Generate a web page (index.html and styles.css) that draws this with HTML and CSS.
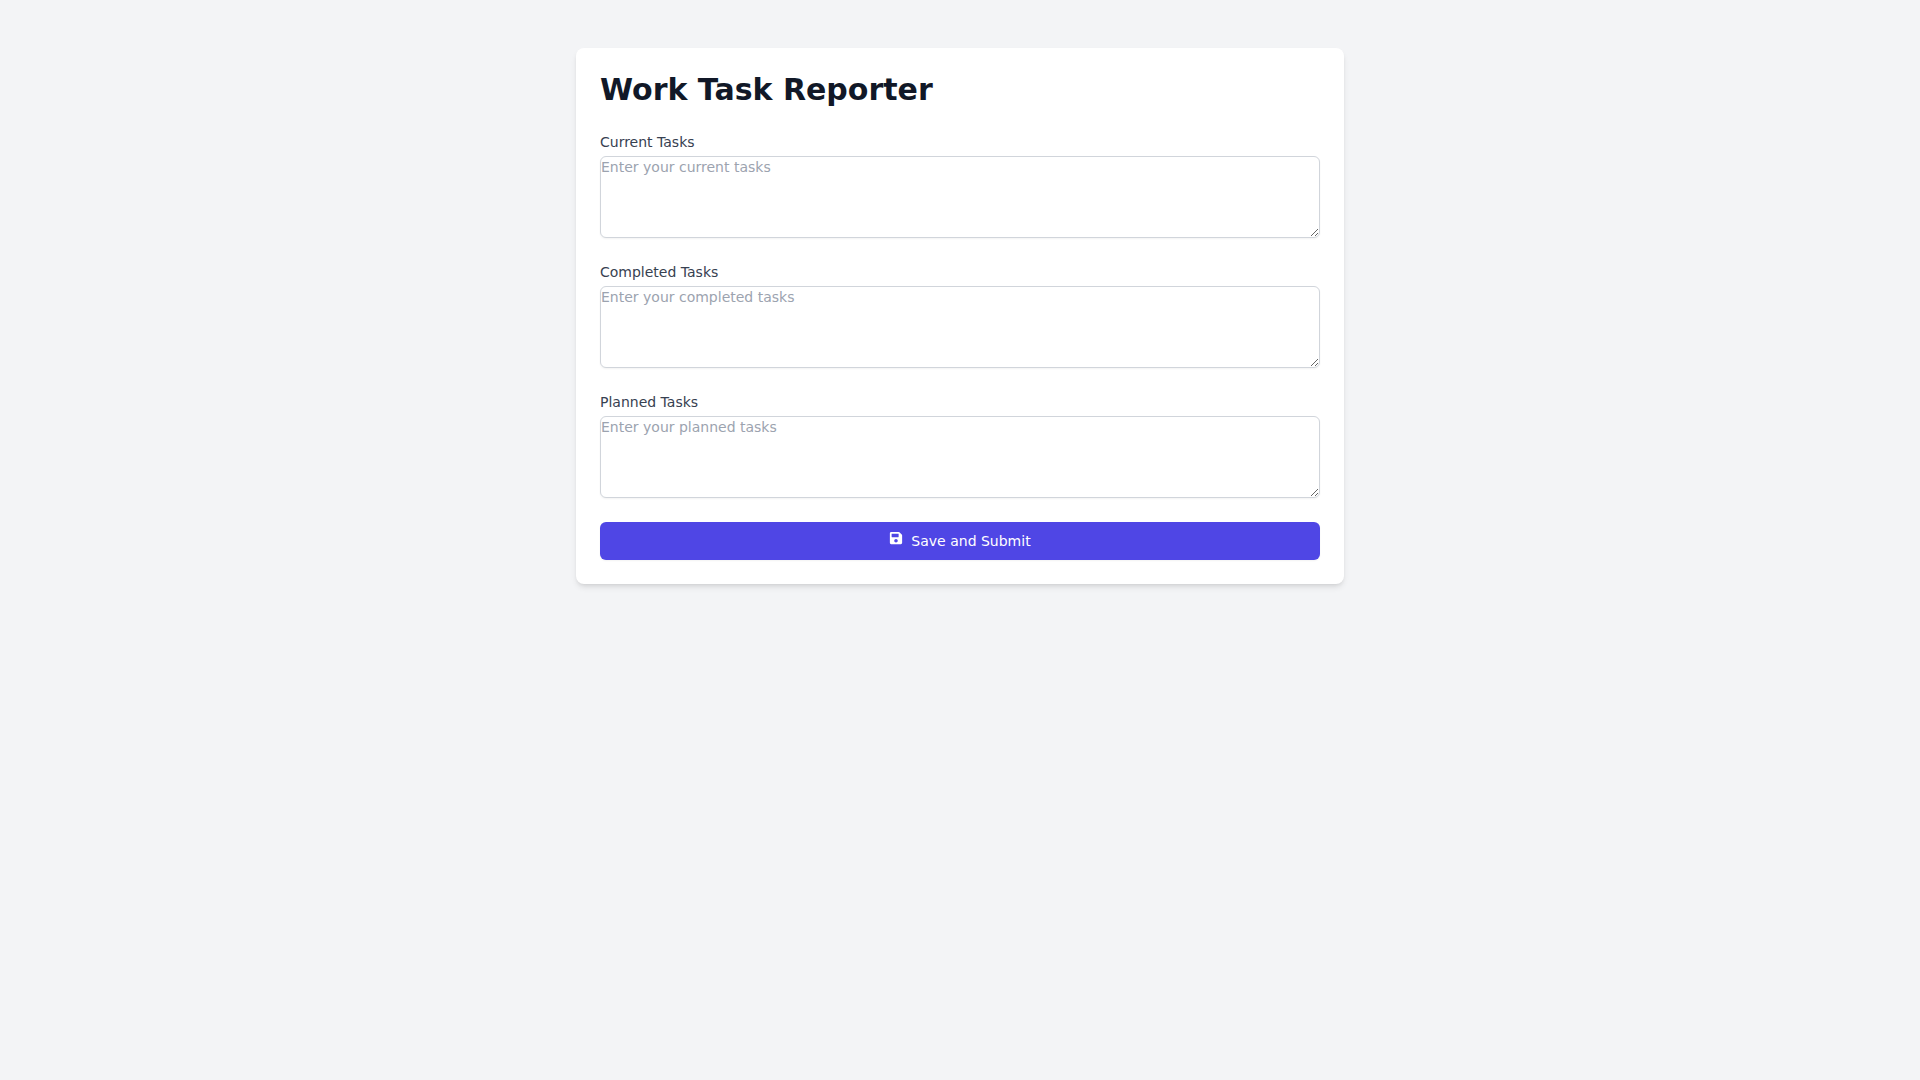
FILE: index.html
```html
<!DOCTYPE html>
<html lang="en">
<head>
    <meta charset="UTF-8">
    <meta name="viewport" content="width=device-width, initial-scale=1.0">
    <title>Work Task Reporter</title>
    <link rel="stylesheet" href="styles.css">
</head>
<body>
    <div class="container">
        <h1>Work Task Reporter</h1>
        <form class="task-form">
            <div class="field">
                <label for="currentTasks">Current Tasks</label>
                <textarea id="currentTasks" name="currentTasks" rows="4" placeholder="Enter your current tasks"></textarea>
            </div>
            <div class="field">
                <label for="completedTasks">Completed Tasks</label>
                <textarea id="completedTasks" name="completedTasks" rows="4" placeholder="Enter your completed tasks"></textarea>
            </div>
            <div class="field">
                <label for="plannedTasks">Planned Tasks</label>
                <textarea id="plannedTasks" name="plannedTasks" rows="4" placeholder="Enter your planned tasks"></textarea>
            </div>
            <button type="submit">
                <svg class="icon" viewBox="0 0 448 512" aria-hidden="true">
                    <path fill="currentColor" d="M433.941 129.941l-83.882-83.882A48 48 0 0 0 316.118 32H48C21.490 32 0 53.490 0 80v352c0 26.510 21.490 48 48 48h352c26.510 0 48-21.490 48-48V163.882a48 48 0 0 0-14.059-33.941zM224 416c-35.346 0-64-28.654-64-64 0-35.346 28.654-64 64-64s64 28.654 64 64c0 35.346-28.654 64-64 64zm96-304.520V212c0 6.627-5.373 12-12 12H76c-6.627 0-12-5.373-12-12V108c0-6.627 5.373-12 12-12h228.520c3.183 0 6.235 1.264 8.485 3.515l3.480 3.480A11.996 11.996 0 0 1 320 111.480z"/>
                </svg>
                Save and Submit
            </button>
        </form>
    </div>
</body>
</html>
```

FILE: styles.css
```css
* {
    box-sizing: border-box;
}

body {
    margin: 0;
    padding: 48px 24px;
    background: #f3f4f6;
    color: #111827;
    font-family: "DejaVu Sans", sans-serif;
    line-height: 24px;
}

.container {
    max-width: 768px;
    margin: 0 auto;
    padding: 24px;
    background: white;
    border-radius: 8px;
    box-shadow: 0 4px 6px -1px rgba(0, 0, 0, 0.1), 0 2px 4px -2px rgba(0, 0, 0, 0.1);
}

h1 {
    margin: 0 0 24px;
    font-size: 30px;
    line-height: 36px;
    font-weight: bold;
}

.task-form {
    display: flex;
    flex-direction: column;
    gap: 24px;
}

label {
    display: block;
    margin-bottom: 4px;
    color: #374151;
    font-size: 14px;
    line-height: 20px;
}

textarea {
    display: block;
    width: 100%;
    padding: 0;
    border: 1px solid #d1d5db;
    border-radius: 6px;
    background: white;
    box-shadow: 0 1px 2px rgba(0, 0, 0, 0.05);
    color: inherit;
    font-family: inherit;
    font-size: 14px;
    line-height: 20px;
}

textarea::placeholder {
    color: #9ca3af;
}

button {
    display: flex;
    justify-content: center;
    padding: 8px 16px;
    border: 1px solid transparent;
    border-radius: 6px;
    background: #4f46e5;
    box-shadow: 0 1px 2px rgba(0, 0, 0, 0.05);
    color: white;
    font-family: inherit;
    font-size: 14px;
    line-height: 20px;
    cursor: pointer;
}

button:hover {
    background: #4338ca;
}

.icon {
    width: 14px;
    height: 14px;
    margin-right: 8px;
}
```
